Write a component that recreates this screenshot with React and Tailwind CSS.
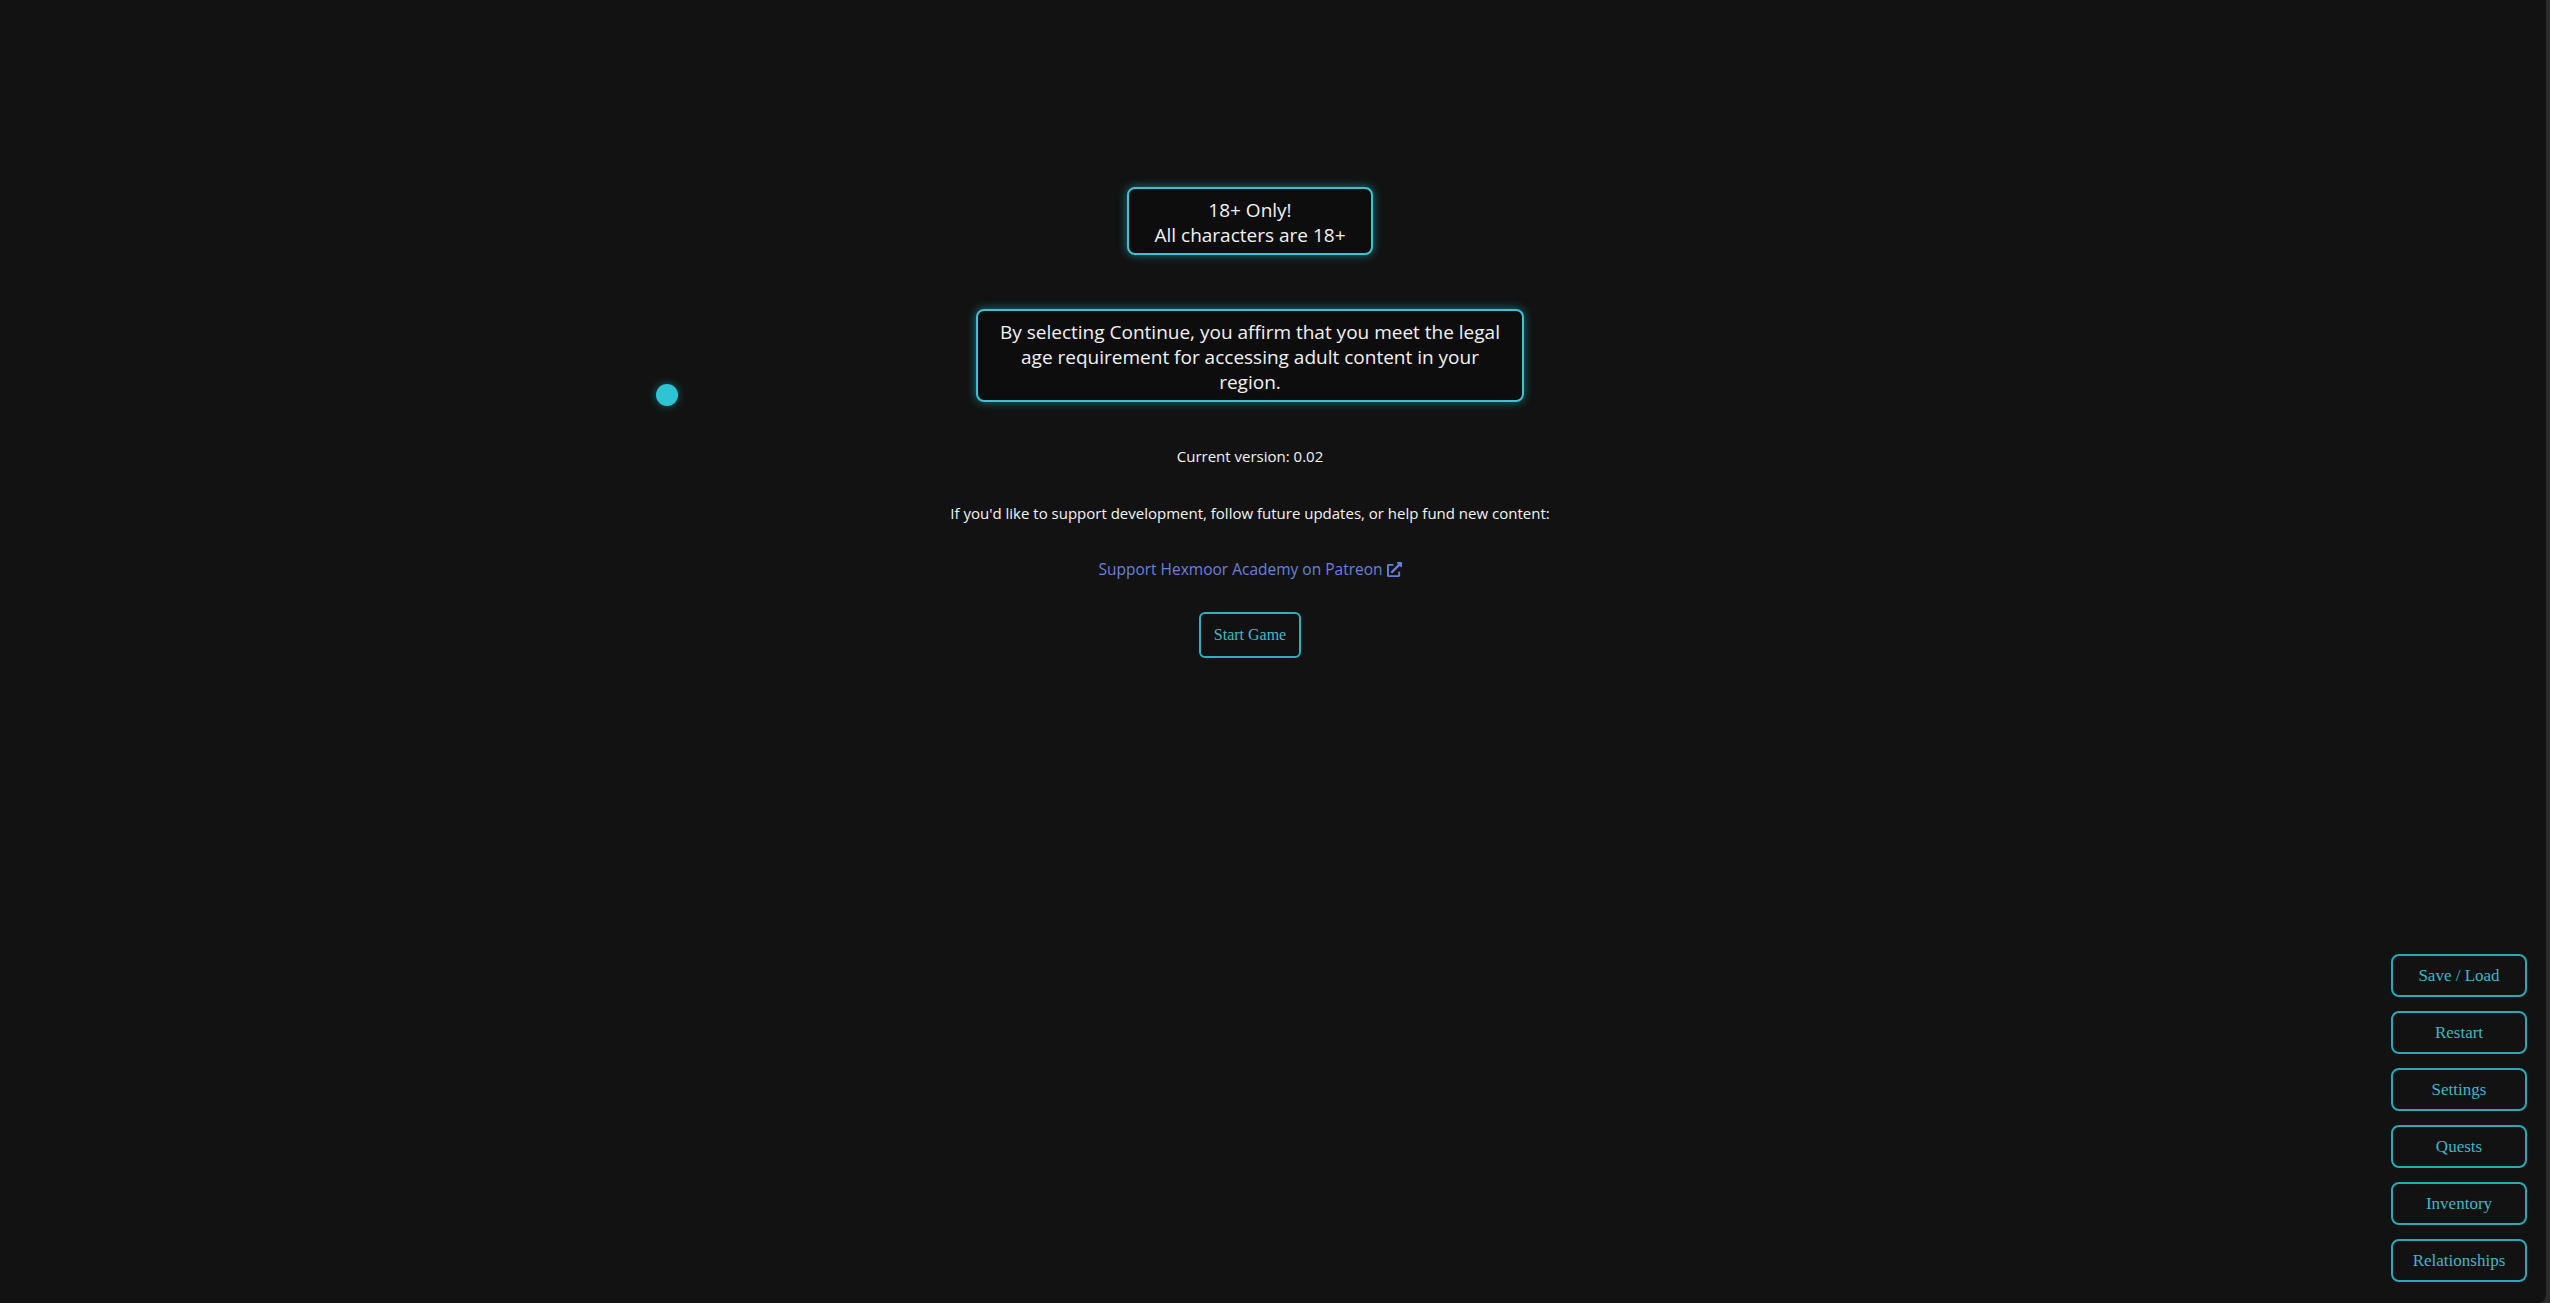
import { FaExternalLinkAlt } from 'react-icons/fa';

const MENU = ['Save / Load', 'Restart', 'Settings', 'Quests', 'Inventory', 'Relationships'];

const sans = { fontFamily: '"Open Sans", "Noto Sans", sans-serif' };
const serif = { fontFamily: '"Liberation Serif", "DejaVu Serif", serif' };

export default function App() {
  return (
    <div className="flex h-screen w-full bg-[#2c2c2c] overflow-hidden">
      <div className="relative flex-1 h-full bg-[#121212] rounded-br-[8px]">
        {/* cursor dot */}
        <div className="absolute left-[656px] top-[384px] w-[22px] h-[22px] rounded-full bg-[#2ec4d4] shadow-[0_0_8px_rgba(46,196,212,0.45)]" />

        <main className="flex flex-col items-center pt-[187px] pr-[46px] text-[#f2f2f2]" style={sans}>
          <div className="w-[246px] rounded-[8px] border-2 border-[#3cc3cf] bg-[#0d0d0d] pt-[9px] pb-[5px] text-center text-[19px] leading-[25px] shadow-[0_0_10px_rgba(40,200,215,0.55)]">
            <div>18+ Only!</div>
            <div>All characters are 18+</div>
          </div>

          <div className="mt-[54px] w-[548px] rounded-[8px] border-2 border-[#3cc3cf] bg-[#0d0d0d] pt-[9px] pb-[5px] text-center text-[19px] leading-[25px] shadow-[0_0_10px_rgba(40,200,215,0.55)]">
            <div className="whitespace-nowrap">By selecting Continue, you affirm that you meet the legal</div>
            <div className="whitespace-nowrap">age requirement for accessing adult content in your</div>
            <div>region.</div>
          </div>

          <p className="mt-[42px] text-[15px] leading-[24px]">Current version: 0.02</p>
          <p className="mt-[33px] text-[15px] leading-[24px]">
            If you'd like to support development, follow future updates, or help fund new content:
          </p>
          <a className="mt-[32px] flex items-center gap-[4px] text-[15.5px] leading-[24px] text-[#6a80dc]" href="#">
            Support Hexmoor Academy on Patreon
            <FaExternalLinkAlt className="w-[15px] h-[15px]" />
          </a>
          <button
            className="mt-[31px] w-[102px] h-[46px] rounded-[6px] border-2 border-[#2fb0bf] bg-[#111111] text-[16px] text-[#3fbac8]"
            style={serif}
          >
            Start Game
          </button>
        </main>

        {/* side menu */}
        <nav className="absolute right-[19px] bottom-[21px] flex flex-col gap-[14px]" style={serif}>
          {MENU.map(label => (
            <button
              key={label}
              className="w-[136px] h-[43px] rounded-[8px] border-2 border-[#2ba8b8] bg-[#121212] text-[17px] text-[#3bb8c6]"
            >
              {label}
            </button>
          ))}
        </nav>
      </div>
      <div className="w-[4px] h-full" />
    </div>
  );
}
